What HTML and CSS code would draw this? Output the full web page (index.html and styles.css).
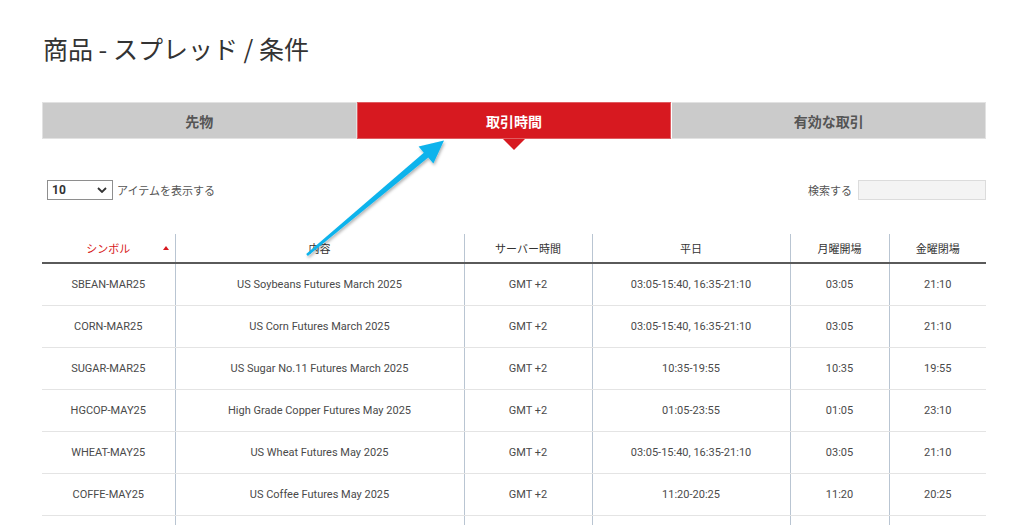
FILE: index.html
```html
<!DOCTYPE html>
<html lang="ja">
<head>
    <meta charset="UTF-8">
    <meta name="viewport" content="width=device-width, initial-scale=1.0">
    <title>商品 - スプレッド / 条件</title>
    <link rel="stylesheet" href="styles.css">
</head>
<body>
    <div class="page">
        <h1 class="page-title">商品 - スプレッド / 条件</h1>

        <div class="tabs">
            <div class="tab">先物</div>
            <div class="tab active">取引時間</div>
            <div class="tab">有効な取引</div>
        </div>

        <div class="table-controls">
            <div class="length">
                <div class="select-box">
                    <span>10</span>
                    <svg class="chevron" width="10" height="6" viewBox="0 0 10 6"><path d="M1 1 L5 5 L9 1" fill="none" stroke="#333" stroke-width="1.8"/></svg>
                </div>
                <span class="ctrl-label">アイテムを表示する</span>
            </div>
            <div class="search">
                <span class="ctrl-label">検索する</span>
                <div class="search-input"></div>
            </div>
        </div>

        <table class="hours-table">
            <colgroup>
                <col style="width:133px">
                <col style="width:289px">
                <col style="width:128px">
                <col style="width:198px">
                <col style="width:99px">
                <col style="width:97px">
            </colgroup>
            <thead>
                <tr>
                    <th class="sorted">シンボル<span class="sort-arrow"></span></th>
                    <th>内容</th>
                    <th>サーバー時間</th>
                    <th>平日</th>
                    <th>月曜開場</th>
                    <th>金曜閉場</th>
                </tr>
            </thead>
            <tbody>
                <tr>
                    <td>SBEAN-MAR25</td>
                    <td>US Soybeans Futures March 2025</td>
                    <td>GMT +2</td>
                    <td>03:05-15:40, 16:35-21:10</td>
                    <td>03:05</td>
                    <td>21:10</td>
                </tr>
                <tr>
                    <td>CORN-MAR25</td>
                    <td>US Corn Futures March 2025</td>
                    <td>GMT +2</td>
                    <td>03:05-15:40, 16:35-21:10</td>
                    <td>03:05</td>
                    <td>21:10</td>
                </tr>
                <tr>
                    <td>SUGAR-MAR25</td>
                    <td>US Sugar No.11 Futures March 2025</td>
                    <td>GMT +2</td>
                    <td>10:35-19:55</td>
                    <td>10:35</td>
                    <td>19:55</td>
                </tr>
                <tr>
                    <td>HGCOP-MAY25</td>
                    <td>High Grade Copper Futures May 2025</td>
                    <td>GMT +2</td>
                    <td>01:05-23:55</td>
                    <td>01:05</td>
                    <td>23:10</td>
                </tr>
                <tr>
                    <td>WHEAT-MAY25</td>
                    <td>US Wheat Futures May 2025</td>
                    <td>GMT +2</td>
                    <td>03:05-15:40, 16:35-21:10</td>
                    <td>03:05</td>
                    <td>21:10</td>
                </tr>
                <tr>
                    <td>COFFE-MAY25</td>
                    <td>US Coffee Futures May 2025</td>
                    <td>GMT +2</td>
                    <td>11:20-20:25</td>
                    <td>11:20</td>
                    <td>20:25</td>
                </tr>
                <tr>
                    <td>&nbsp;</td>
                    <td>&nbsp;</td>
                    <td>&nbsp;</td>
                    <td>&nbsp;</td>
                    <td>&nbsp;</td>
                    <td>&nbsp;</td>
                </tr>
            </tbody>
        </table>
    </div>

    <!-- annotation arrow drawn over the page -->
    <svg class="callout" width="1024" height="525" viewBox="0 0 1024 525">
        <defs>
            <filter id="arrowShadow" x="-20%" y="-20%" width="140%" height="140%">
                <feDropShadow dx="1" dy="2" stdDeviation="1.5" flood-color="#000" flood-opacity="0.3"/>
            </filter>
        </defs>
        <polygon filter="url(#arrowShadow)" fill="#0cb3ec"
            points="306.2,254 423.8,152.8 418.6,146.4 444,140.5 433.4,163.6 428.2,157.6 307.8,256"/>
    </svg>
</body>
</html>
```

FILE: styles.css
```css
body {
    margin: 0;
    font-family: Roboto, "Noto Sans CJK JP", sans-serif;
    color: #444;
    background: #fff;
    position: relative;
    overflow: hidden;
    height: 525px;
}

.page {
    padding: 0 38px 0 42px;
}

.page-title {
    font-family: "Noto Sans CJK JP", sans-serif;
    font-size: 25px;
    font-weight: 400;
    color: #333;
    margin: 0;
    padding: 30px 0 0 1px;
    line-height: 36px;
}

.tabs {
    display: flex;
    margin-top: 36px;
    height: 37px;
}

.tab {
    flex: 1;
    display: flex;
    align-items: center;
    justify-content: center;
    background: #cbcbcb;
    border: 1px solid #e2e2e2;
    color: #555;
    font-family: "Noto Sans CJK JP", sans-serif;
    font-weight: 700;
    font-size: 14px;
    position: relative;
}

.tab + .tab {
    border-left: 1px solid #fff;
}

.tab.active {
    background: #d71920;
    border-color: #e05c61;
    color: #fff;
}

.tab.active::after {
    content: "";
    position: absolute;
    left: 50%;
    bottom: -12px;
    margin-left: -11px;
    border-left: 11px solid transparent;
    border-right: 11px solid transparent;
    border-top: 11px solid #d71920;
}

.table-controls {
    display: flex;
    justify-content: space-between;
    align-items: center;
    margin-top: 41px;
    height: 20px;
}

.length,
.search {
    display: flex;
    align-items: center;
}

.length {
    padding-left: 5px;
}

.select-box {
    display: flex;
    align-items: center;
    justify-content: space-between;
    padding: 0 5px 0 4px;
    box-sizing: border-box;
    width: 66px;
    height: 20px;
    border: 1px solid #8e8e8e;
    font-size: 12px;
    font-weight: 700;
    color: #333;
}

.ctrl-label {
    font-size: 11px;
    color: #555;
    margin-left: 4px;
}

.search .ctrl-label {
    margin: 0 6px 0 0;
}

.search-input {
    width: 128px;
    height: 20px;
    box-sizing: border-box;
    border: 1px solid #dcdcdc;
    background: #f4f4f4;
}

.hours-table {
    width: 944px;
    margin-top: 34px;
    border-collapse: collapse;
    table-layout: fixed;
    font-size: 11px;
}

.hours-table th {
    height: 28px;
    font-weight: 400;
    color: #333;
    padding: 0;
    border-bottom: 2px solid #5a5a5a;
    position: relative;
}

.hours-table td {
    height: 41px;
    padding: 0;
    text-align: center;
    border-bottom: 1px solid #e4e4e4;
    color: #4a4a4a;
}

.hours-table th + th,
.hours-table td + td {
    border-left: 1px solid #b9c5d2;
}

.hours-table th.sorted {
    color: #d71920;
}

.sort-arrow {
    position: absolute;
    right: 6px;
    top: 12px;
    border-left: 3px solid transparent;
    border-right: 3px solid transparent;
    border-bottom: 4px solid #d71920;
}

.callout {
    position: absolute;
    top: 0;
    left: 0;
    pointer-events: none;
}
```
